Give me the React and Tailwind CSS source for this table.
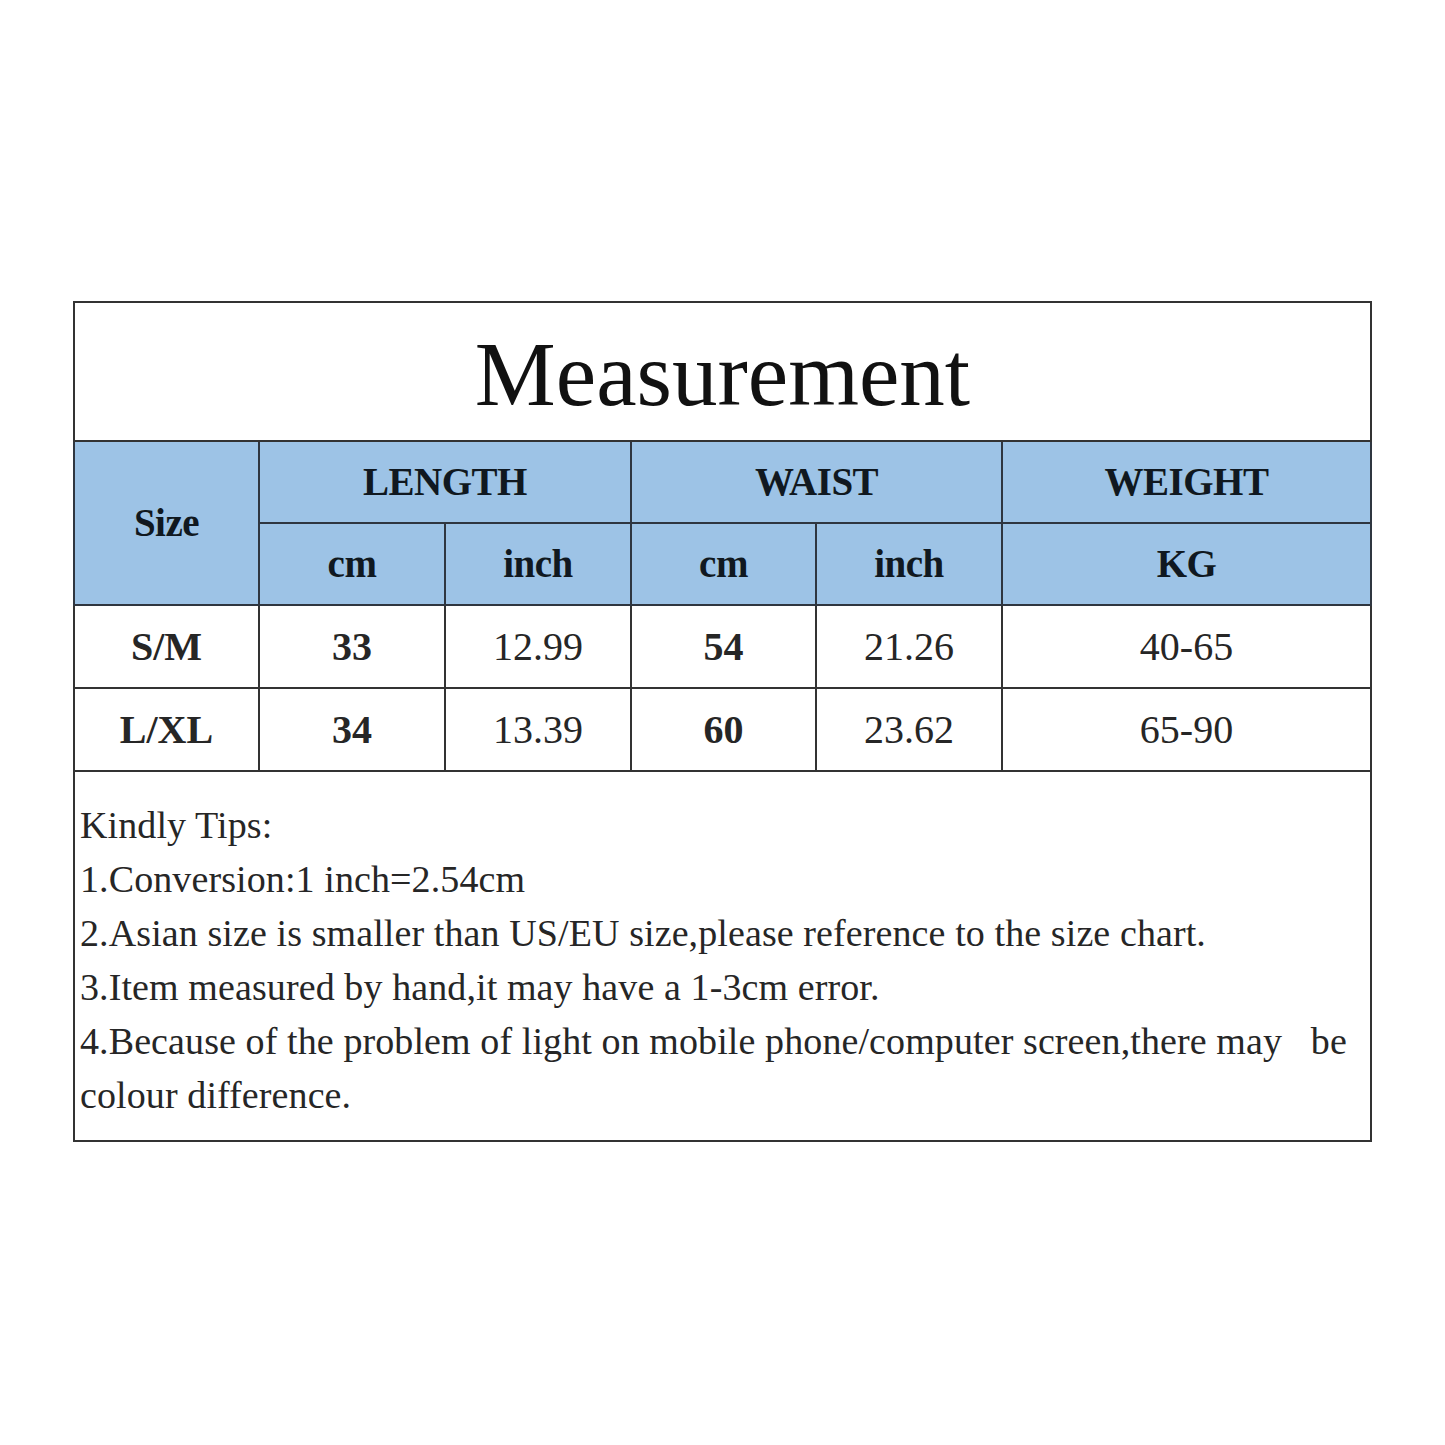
export default function App() {
  const serif = { fontFamily: '"Liberation Serif", "Times New Roman", serif' };
  const head = "border-2 border-[#2f3640] bg-[#9dc3e6] text-center font-bold text-[39px] tracking-[-0.5px] text-[#101820]";
  const cell = "border-2 border-[#333333] text-center text-[40px] text-[#262626]";
  const bold = " font-bold text-[39px] text-[#151515]";

  const rows = [
    ["S/M", "33", "12.99", "54", "21.26", "40-65"],
    ["L/XL", "34", "13.39", "60", "23.62", "65-90"],
  ];

  const tips = [
    "Kindly Tips:",
    "1.Conversion:1 inch=2.54cm",
    "2.Asian size is smaller than US/EU size,please reference to the size chart.",
    "3.Item measured by hand,it may have a 1-3cm error.",
    "4.Because of the problem of light on mobile phone/computer screen,there may\u00a0\u00a0\u00a0be",
    "colour difference.",
  ];

  return (
    <div className="min-h-[1445px] bg-white pt-[301px]" style={serif}>
      <table className="mx-auto w-[1299px] table-fixed border-collapse border-2 border-[#333333]">
        <colgroup>
          <col className="w-[185px]" />
          <col className="w-[186px]" />
          <col className="w-[186px]" />
          <col className="w-[185px]" />
          <col className="w-[186px]" />
          <col />
        </colgroup>
        <tbody>
          <tr className="h-[139px]">
            <td colSpan={6} className="border-2 border-[#333333] pt-[6px] text-center text-[91px] leading-none text-[#111]">
              Measurement
            </td>
          </tr>
          <tr className="h-[82px]">
            <td rowSpan={2} className={head}>Size</td>
            <td colSpan={2} className={head}>LENGTH</td>
            <td colSpan={2} className={head}>WAIST</td>
            <td className={head}>WEIGHT</td>
          </tr>
          <tr className="h-[82px]">
            <td className={head}>cm</td>
            <td className={head}>inch</td>
            <td className={head}>cm</td>
            <td className={head}>inch</td>
            <td className={head}>KG</td>
          </tr>
          {rows.map((r) => (
            <tr key={r[0]} className="h-[83px]">
              <td className={cell + bold}>{r[0]}</td>
              <td className={cell + bold}>{r[1]}</td>
              <td className={cell}>{r[2]}</td>
              <td className={cell + bold}>{r[3]}</td>
              <td className={cell}>{r[4]}</td>
              <td className={cell}>{r[5]}</td>
            </tr>
          ))}
          <tr>
            <td colSpan={6} className="border-2 border-[#333333] pb-[18px] pl-[5px] pt-[26px] text-[38px] leading-[54px] tracking-[0.1px] text-[#262626]">
              {tips.map((t) => (
                <div key={t} className="whitespace-pre">{t}</div>
              ))}
            </td>
          </tr>
        </tbody>
      </table>
    </div>
  );
}
